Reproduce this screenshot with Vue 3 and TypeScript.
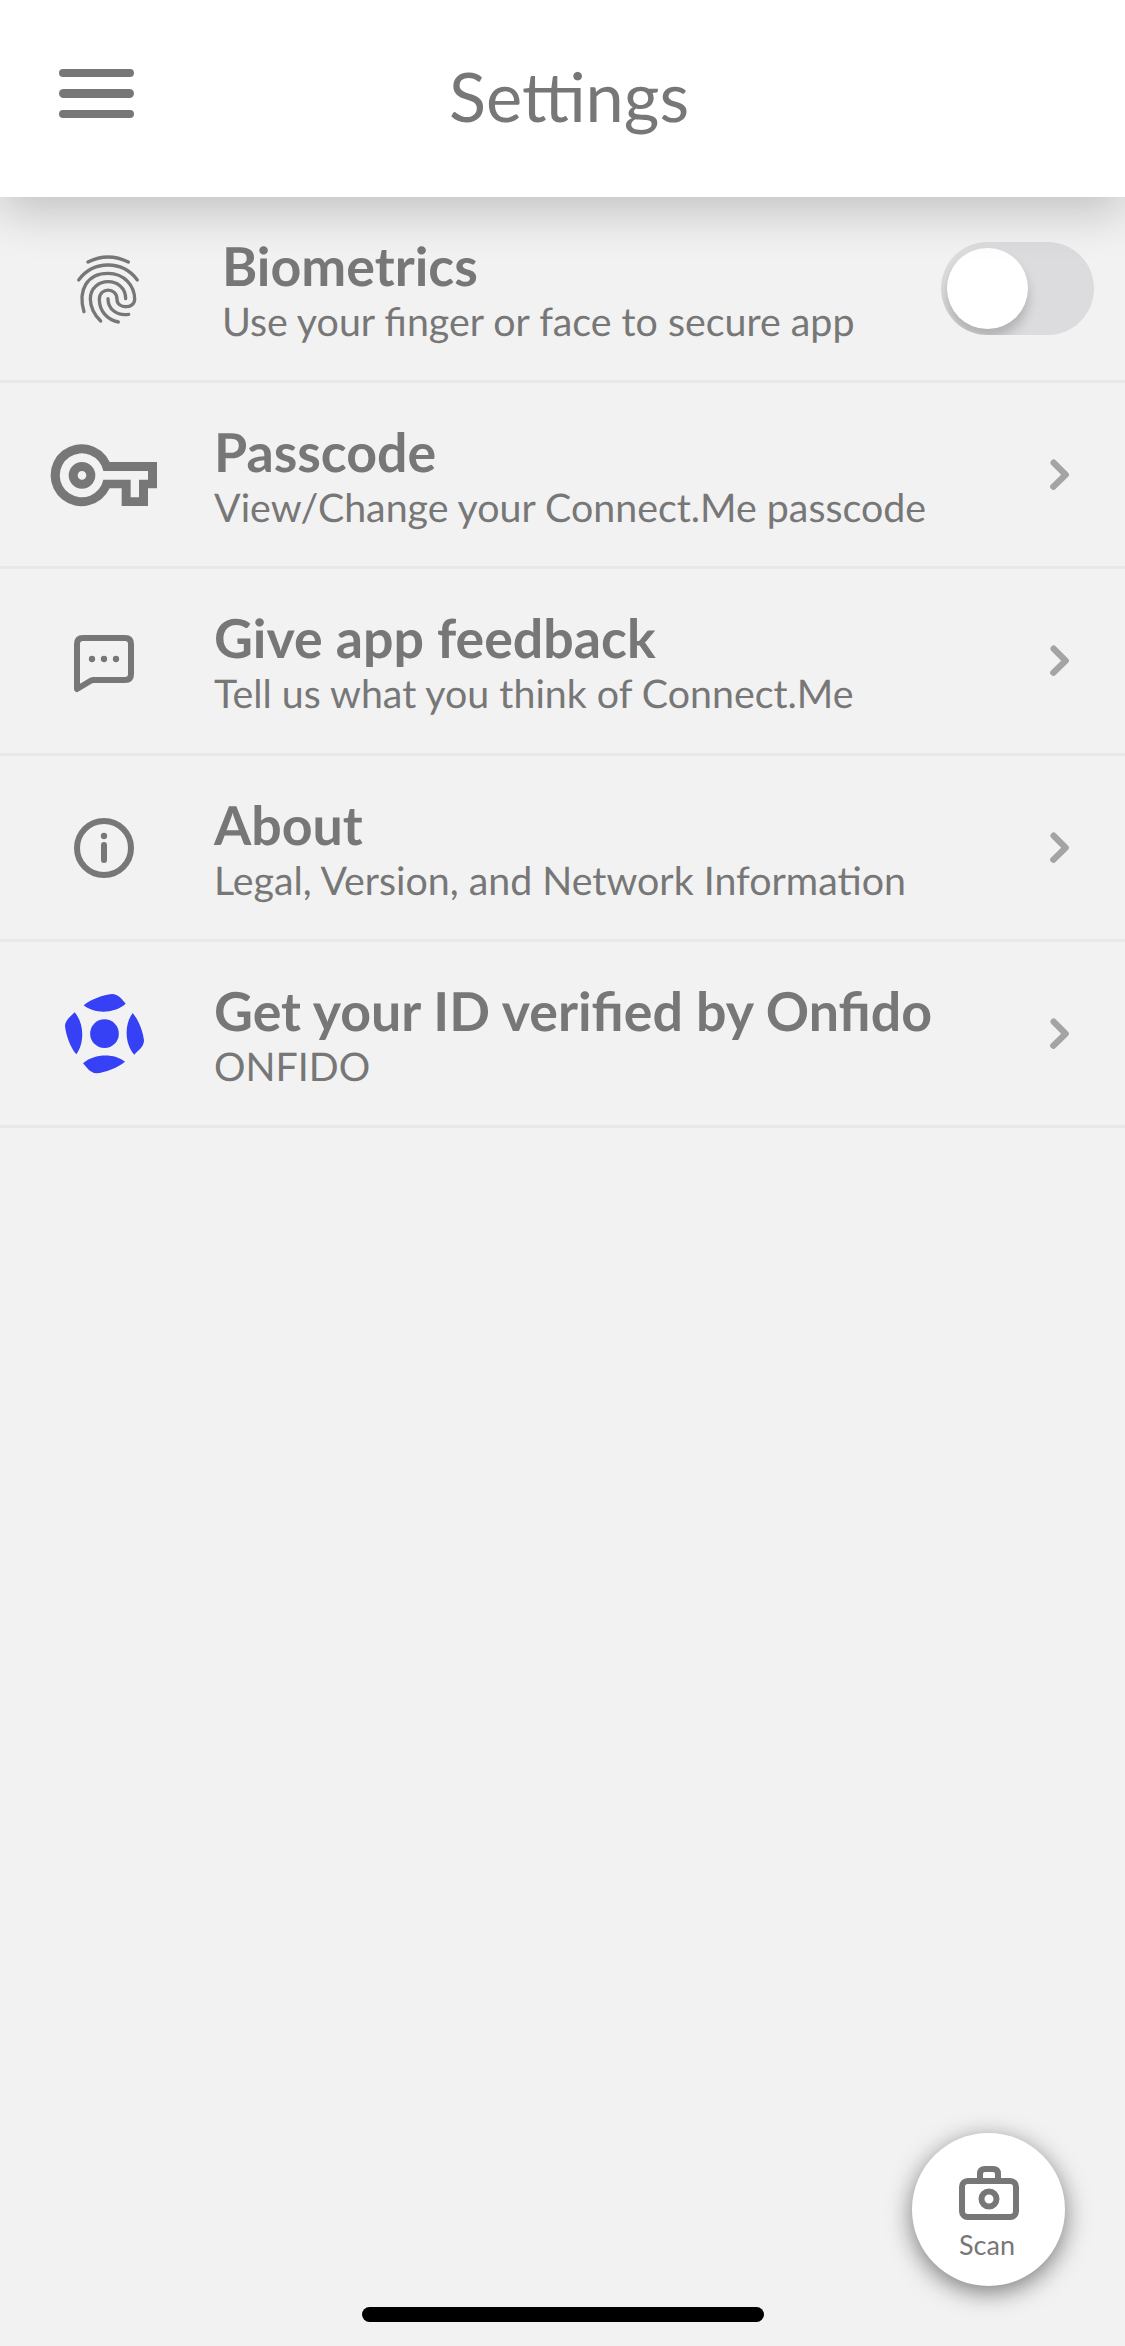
<script setup lang="ts">
interface Item {
  id: string
  title: string
  subtitle: string
}

const items: Item[] = [
  { id: 'biometrics', title: 'Biometrics', subtitle: 'Use your finger or face to secure app' },
  { id: 'passcode', title: 'Passcode', subtitle: 'View/Change your Connect.Me passcode' },
  { id: 'feedback', title: 'Give app feedback', subtitle: 'Tell us what you think of Connect.Me' },
  { id: 'about', title: 'About', subtitle: 'Legal, Version, and Network Information' },
  { id: 'onfido', title: 'Get your ID verified by Onfido', subtitle: 'ONFIDO' },
]
</script>

<template>
  <div class="screen">
    <header class="header">
      <button class="menu" aria-label="Menu"><span /><span /><span /></button>
      <h1>Settings</h1>
    </header>

    <main class="list">
      <section v-for="item in items" :key="item.id" class="row" :class="item.id">
        <svg v-if="item.id === 'biometrics'" class="icon line" viewBox="0 -4 420 360" stroke-width="10">
          <path d="M144 95Q204 65 265 95" />
          <path d="M116 149C160 89 248 89 292 149" />
          <path d="M132 244C112 176 144 129 204 129C254 129 284 167 284 207C284 236 232 237 231 207C231 170 178 170 178 207C178 242 201 268 235 275" />
          <path d="M182 272C158 248 151 229 151 205C152 137 257 137 257 205" />
          <path d="M204 205C204 236 230 257 266 252" />
        </svg>
        <svg v-else-if="item.id === 'passcode'" class="icon" viewBox="0 -16 420 360">
          <path fill="#777" fill-rule="evenodd" d="M209 125H351V204H324V257H245V204H209A93 93 0 1 1 209 125ZM190 152A66 66 0 1 0 190 178H272V231H297V178H324V152Z" />
          <circle cx="126" cy="165" r="26.500" fill="none" stroke="#777" stroke-width="27" />
        </svg>
        <svg v-else-if="item.id === 'feedback'" class="icon line" viewBox="0 -27 420 360" stroke-width="18">
          <path d="M111 237V102Q111 84 129 84H255Q273 84 273 102V192Q273 210 255 210H159Q155 210 151 213Z" />
          <g fill="#777" stroke="none"><circle cx="156" cy="147" r="9.500" /><circle cx="192" cy="147" r="9.500" /><circle cx="228" cy="147" r="9.500" /></g>
        </svg>
        <svg v-else-if="item.id === 'about'" class="icon line" viewBox="0 -39 420 360" stroke-width="18">
          <circle cx="192" cy="144" r="81" />
          <path d="M192 135V180" />
          <circle cx="192" cy="108" r="9.500" fill="#777" stroke="none" />
        </svg>
        <svg v-else class="icon" viewBox="0 8 420 360" fill="#3640f5">
          <circle cx="193.500" cy="190" r="43" />
          <path d="M131 105C153 86 190 74 216 71C235 71 247 88 257 100C222 131 163 131 131 105Z" />
          <path d="M278 128C297 151 309 184 312 210C312 230 294 241 283 253C253 219 253 161 278 128Z" />
          <path d="M255 274C233 293 195 306 169 309C150 308 140 291 129 279C164 249 223 249 255 274Z" />
          <path d="M109 252C90 230 78 194 75 167C76 148 93 138 104 126C134 161 133 219 109 252Z" />
        </svg>

        <div class="text">
          <h2>{{ item.title }}</h2>
          <p>{{ item.subtitle }}</p>
        </div>

        <div v-if="item.id === 'biometrics'" class="toggle" role="switch" aria-checked="false"><span /></div>
        <svg v-else class="chevron" viewBox="0 0 57 93"><path d="M11 11L47 47L10 83" /></svg>
      </section>
    </main>

    <button class="scan">
      <svg viewBox="0 0 180 162">
        <rect x="9" y="45" width="162" height="108" rx="17" />
        <path d="M63 43V24Q63 9 78 9H102Q117 9 117 24V43" />
        <circle cx="90" cy="99" r="22.500" />
      </svg>
      <span>Scan</span>
    </button>
    <div class="home" />
  </div>
</template>

<style>
body { margin: 0; background: #f2f2f2; }
</style>

<style scoped>
.screen {
  position: relative;
  height: 2346px;
  overflow: hidden;
  background: #f2f2f2;
  color: #777;
  font-family: Lato, sans-serif;
  text-rendering: geometricPrecision;
}
button { border: 0; padding: 0; font: inherit; color: inherit; }
h1, h2, p { margin: 0; }
.header {
  position: relative;
  z-index: 1;
  display: flex;
  height: 197px;
  background: #fff;
  box-shadow: 0 15px 45px rgba(0, 0, 0, 0.2);
}
.menu {
  display: flex;
  flex-direction: column;
  gap: 12.500px;
  width: 75px;
  margin: 68.500px 0 0 59px;
  background: none;
}
.menu span { height: 8.300px; border-radius: 5px; background: #777; }
h1 {
  margin: 56px 0 0 315px;
  font-size: 68.500px;
  font-weight: 400;
  line-height: 80px;
}
.row {
  display: flex;
  align-items: center;
  box-sizing: border-box;
  height: 186.250px;
  padding-left: 40px;
  border-bottom: 3px solid #e8e8e8;
}
.row.biometrics { height: 186px; }
.icon { flex: none; width: 140px; height: 120px; }
.line { fill: none; stroke: #777; stroke-linecap: round; stroke-linejoin: round; }
.text { flex: 1; margin-left: 34px; padding-top: 3px; white-space: nowrap; }
.biometrics .text { margin-left: 42px; }
h2 { font-size: 53.700px; font-weight: 700; line-height: 65px; }
p { font-size: 39.350px; line-height: 46.800px; }
.toggle {
  width: 153px;
  height: 93px;
  margin-right: 31px;
  border-radius: 47px;
  background: #dcdcdf;
  overflow: hidden;
}
.toggle span {
  display: block;
  width: 81px;
  height: 81px;
  margin: 6px;
  border-radius: 50%;
  background: #fff;
  box-shadow: 0 9px 12px rgba(0, 0, 0, 0.2);
}
.chevron {
  width: 19px;
  height: 31px;
  margin-right: 56px;
  fill: none;
  stroke: #a4a4a4;
  stroke-width: 19;
  stroke-linecap: round;
  stroke-linejoin: round;
}
.scan {
  position: absolute;
  right: 60px;
  bottom: 60px;
  display: flex;
  flex-direction: column;
  align-items: center;
  width: 153px;
  height: 153px;
  padding-top: 33px;
  border-radius: 50%;
  background: #fff;
  box-shadow: 0 6px 24px rgba(0, 0, 0, 0.5);
}
.scan svg { width: 60px; height: 54px; fill: none; stroke: #777; stroke-width: 18; }
.scan span { margin: 9px 3px 0 0; font-size: 27px; line-height: 32px; }
.home {
  position: absolute;
  left: 362px;
  bottom: 24px;
  width: 402px;
  height: 15px;
  border-radius: 8px;
  background: #000;
}
</style>
